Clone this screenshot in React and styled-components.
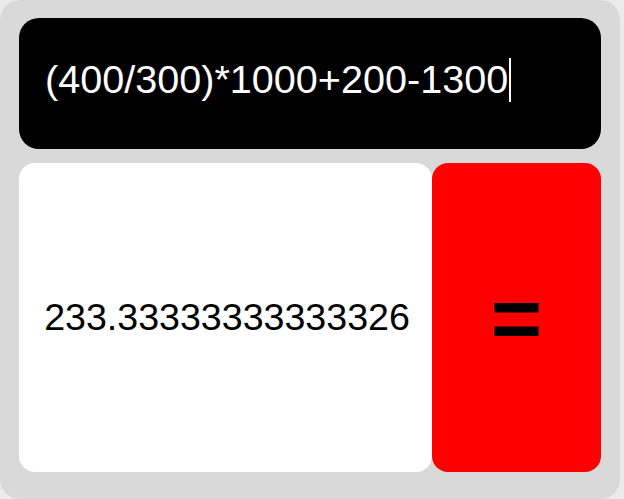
import React from "react";
import styled, { createGlobalStyle } from "styled-components";

const Global = createGlobalStyle`
  html, body { margin: 0; padding: 0; background: #ebebeb; }
  body { font-family: "Liberation Sans", Arial, sans-serif; }
`;

const Calculator = styled.div`
  box-sizing: border-box;
  width: 620px;
  height: 499px;
  background: #d9d9d9;
  border-radius: 20px;
  padding: 18px 19px 27px;
  display: flex;
  flex-direction: column;
  gap: 14px;
`;

const Display = styled.div`
  box-sizing: border-box;
  height: 131px;
  background: #000;
  color: #fff;
  border-radius: 20px;
  padding: 0 25px 8px 26px;
  display: flex;
  align-items: center;
  font-size: 39.6px;
`;

const Caret = styled.span`
  display: inline-block;
  width: 2px;
  height: 44px;
  background: #fff;
  margin-left: 1px;
  vertical-align: middle;
`;

const Row = styled.div`
  flex: 1;
  display: flex;
`;

const Result = styled.div`
  flex: 1;
  background: #fff;
  color: #000;
  border-radius: 16px;
  display: flex;
  align-items: center;
  justify-content: center;
  font-size: 37.6px;
  padding-left: 3px;
`;

const Equals = styled.button`
  width: 169px;
  border: none;
  background: #ff0000;
  color: #000;
  border-radius: 16px;
  font-family: "Liberation Sans", Arial, sans-serif;
  font-weight: bold;
  font-size: 88px;
  display: flex;
  align-items: center;
  justify-content: center;
  padding: 0;
  cursor: pointer;
`;

export default function App() {
  return (
    <>
      <Global />
      <Calculator>
        <Display>
          <span>(400/300)*1000+200-1300</span>
          <Caret />
        </Display>
        <Row>
          <Result>233.33333333333326</Result>
          <Equals>=</Equals>
        </Row>
      </Calculator>
    </>
  );
}
